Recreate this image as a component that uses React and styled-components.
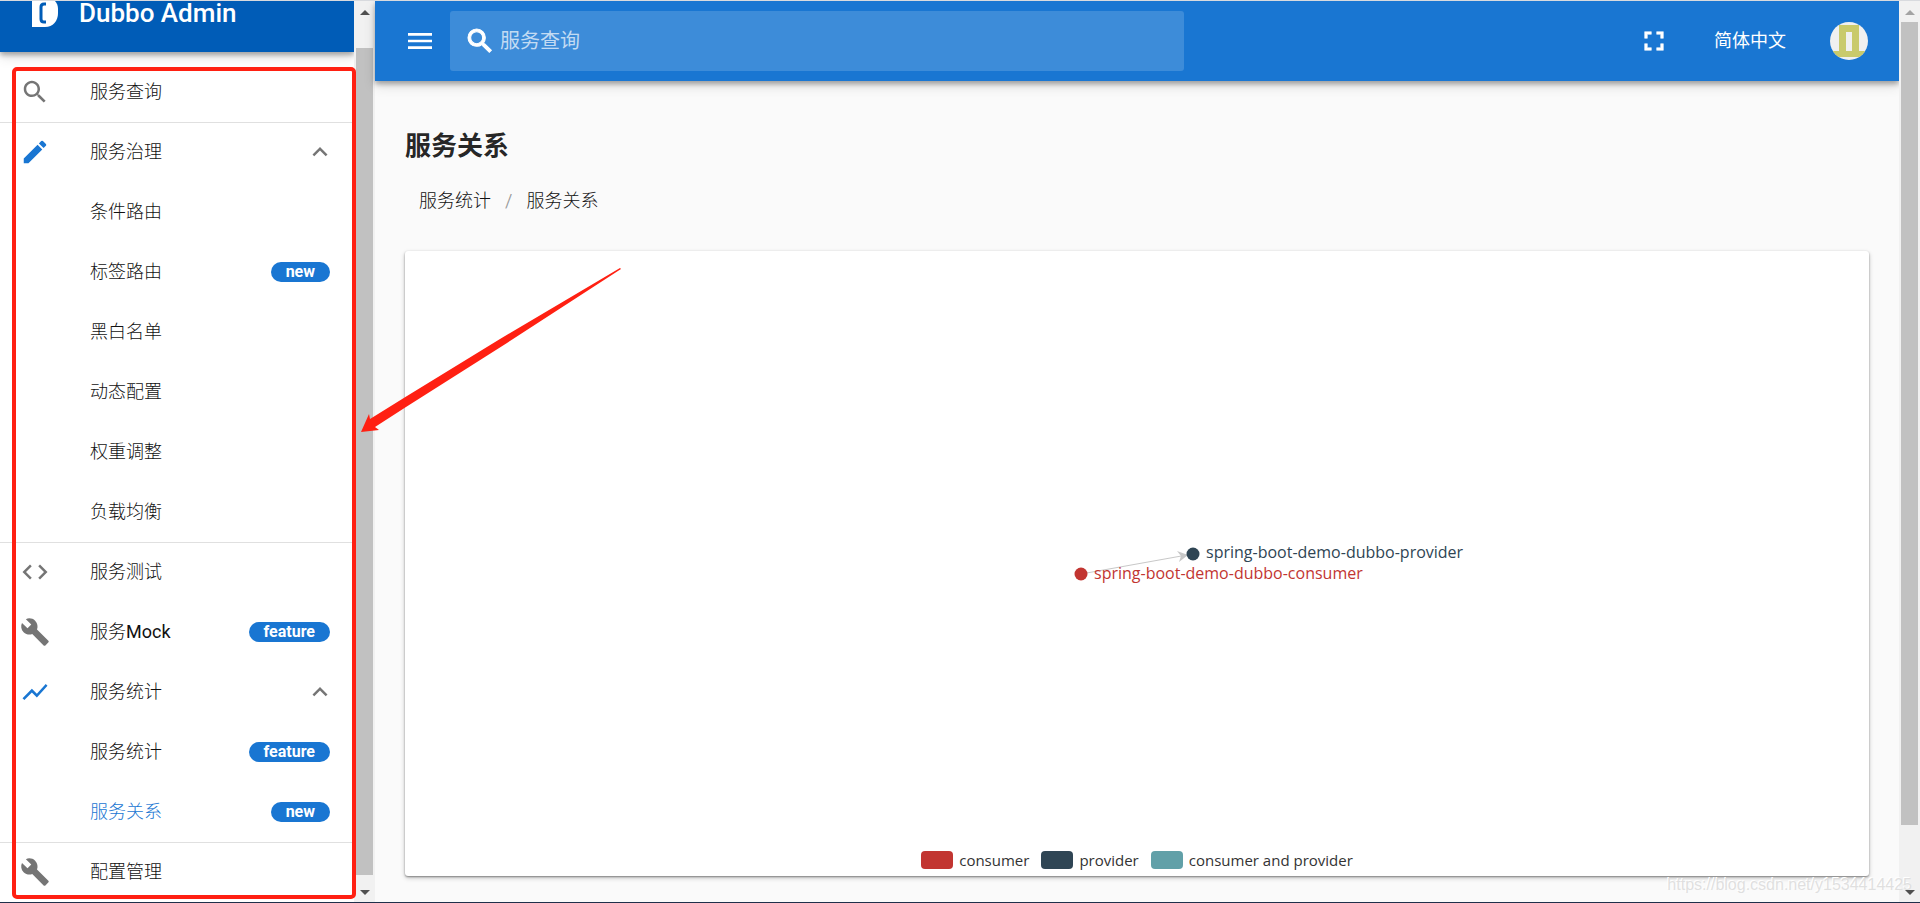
import React from "react";
import styled, { createGlobalStyle, css } from "styled-components";

const GlobalStyle = createGlobalStyle`
  *, *::before, *::after { box-sizing: border-box; }
  body {
    margin: 0;
    background: #fafafa;
    color: rgba(0, 0, 0, 0.87);
    font-family: Roboto, "Noto Sans CJK SC", sans-serif;
    font-size: 18px;
    line-height: 24px;
  }
  button, input { font: inherit; color: inherit; }
  button { border: 0; padding: 0; background: none; cursor: pointer; }
  a { color: inherit; text-decoration: none; }
  ul, ol { list-style: none; margin: 0; padding: 0; }
`;

const Page = styled.div`
  position: relative;
  display: grid;
  grid-template-columns: 354px 21px minmax(0, 1fr) 21px;
  min-height: 100vh;
  overflow: hidden;
  border-top: 1px solid #d8dade;
  border-bottom: 1px solid #1f2f4a;
`;

/* ---------- icons ---------- */

const paths = {
  search:
    "M15.5 14h-.79l-.28-.27C15.41 12.59 16 11.11 16 9.5 16 5.91 13.09 3 9.5 3S3 5.91 3 9.5 5.91 16 9.5 16c1.61 0 3.09-.59 4.23-1.57l.27.28v.79l5 4.99L20.49 19l-4.99-5zm-6 0C7.01 14 5 11.99 5 9.5S7.01 5 9.5 5 14 7.01 14 9.5 11.99 14 9.5 14z",
  edit:
    "M3 17.25V21h3.75L17.81 9.94l-3.75-3.75L3 17.25zM20.71 7.04a1 1 0 0 0 0-1.41l-2.34-2.34a1 1 0 0 0-1.41 0l-1.83 1.83 3.75 3.75 1.83-1.83z",
  code:
    "M9.4 16.6L4.8 12l4.6-4.6L8 6l-6 6 6 6 1.4-1.4zm5.2 0l4.6-4.6-4.6-4.6L16 6l6 6-6 6-1.4-1.4z",
  build:
    "M22.7 19l-9.1-9.1c.9-2.3.4-5-1.5-6.9-2-2-5-2.4-7.4-1.3L9 6 6 9 1.6 4.7C.4 7.1.9 10.1 2.9 12.1c1.9 1.9 4.6 2.4 6.9 1.5l9.1 9.1c.4.4 1 .4 1.4 0l2.3-2.3c.5-.4.5-1.1.1-1.4z",
  chart: "M3.5 18.49l6-6.01 4 4L22 6.92l-1.41-1.41-7.09 7.97-4-4L2 16.99z",
  up: "M12 8l-6 6 1.41 1.41L12 10.83l4.59 4.58L18 14z",
  menu: "M3 18h18v-2H3v2zm0-5h18v-2H3v2zm0-7v2h18V6H3z",
  fullscreen:
    "M7 14H5v5h5v-2H7v-3zm-2-4h2V7h3V5H5v5zm12 7h-3v2h5v-5h-2v3zM14 5v2h3v3h2V5h-5z",
};

const Svg = styled.svg`
  display: block;
  flex: none;
  width: ${(p) => p.$size}px;
  height: ${(p) => p.$size}px;
  fill: currentColor;
  stroke: currentColor;
  stroke-width: ${(p) => p.$weight || 0};
`;

const Icon = ({ name, size = 30, weight }) => (
  <Svg viewBox="0 0 24 24" $size={size} $weight={weight} aria-hidden="true">
    <path d={paths[name]} />
  </Svg>
);

/* ---------- sidebar ---------- */

const Sidebar = styled.aside`
  background: #fff;
`;

const Brand = styled.header`
  display: flex;
  align-items: flex-start;
  gap: 15px;
  height: 51px;
  margin-bottom: 10px;
  padding: 0 26px;
  background: #005cb7;
  color: #fff;
  font-size: 26px;
  font-weight: 500;
  box-shadow: 0 3px 5px rgba(0, 0, 0, 0.3), 0 5px 12px rgba(0, 0, 0, 0.12);
`;

const rowStyle = css`
  display: flex;
  align-items: center;
  width: 100%;
  height: 60px;
  padding: 0 24px 2px 20px;
  border-top: 1px solid ${(p) => (p.$divided ? "#e0e0e0" : "transparent")};
  color: ${(p) => (p.$active ? "#1976d2" : "#111")};
  font-weight: 300;
  text-align: left;
`;
const NavLink = styled.a`${rowStyle}`;
const NavToggle = styled.button`${rowStyle}`;

const IconSlot = styled.span`
  width: 70px;
  flex: none;
  color: ${(p) => (p.$active ? "#1976d2" : "#757575")};
`;
const NavLabel = styled.span`
  flex: 1;
  b { font-weight: 400; }
`;
const Chevron = styled.span`
  color: #757575;
  margin-right: -5px;
`;
const Badge = styled.span`
  height: 20px;
  padding: 0 15px;
  border-radius: 10px;
  background: #1976d2;
  color: #fff;
  font-size: 16px;
  font-weight: 700;
  line-height: 20px;
`;

const nav = [
  { label: "服务查询", icon: "search" },
  {
    label: "服务治理", icon: "edit", highlight: true, divided: true,
    children: [
      { label: "条件路由" },
      { label: "标签路由", badge: "new" },
      { label: "黑白名单" },
      { label: "动态配置" },
      { label: "权重调整" },
      { label: "负载均衡" },
    ],
  },
  { label: "服务测试", icon: "code", divided: true },
  { label: "服务", latin: "Mock", icon: "build", badge: "feature" },
  {
    label: "服务统计", icon: "chart", highlight: true,
    children: [
      { label: "服务统计", badge: "feature" },
      { label: "服务关系", badge: "new", active: true },
    ],
  },
  { label: "配置管理", icon: "build", divided: true },
];

function NavItem({ item }) {
  const content = (
    <>
      <IconSlot $active={item.highlight}>
        {item.icon && <Icon name={item.icon} />}
      </IconSlot>
      <NavLabel>
        {item.label}
        {item.latin && <b>{item.latin}</b>}
      </NavLabel>
      {item.badge && <Badge>{item.badge}</Badge>}
      {item.children && <Chevron><Icon name="up" /></Chevron>}
    </>
  );
  return (
    <li>
      {item.children ? (
        <>
          <NavToggle type="button" aria-expanded="true" $divided={item.divided}>
            {content}
          </NavToggle>
          <ul>
            {item.children.map((c) => <NavItem key={c.label} item={c} />)}
          </ul>
        </>
      ) : (
        <NavLink href="#" $divided={item.divided} $active={item.active}>
          {content}
        </NavLink>
      )}
    </li>
  );
}

const Logo = () => (
  <svg width="38" height="30" viewBox="0 8 38 30" aria-hidden="true">
    <path fill="#fff" d="M6 4h12c9 0 14 5 14 12v4c0 8-5 14-13 14H6z" />
    <path fill="none" stroke="#005cb7" strokeWidth="3" d="M20 11h-2q-3 0-3 3v12q0 3 3 3h2" />
  </svg>
);

/* ---------- scrollbars ---------- */

const Track = styled.div`
  display: flex;
  flex-direction: column;
  align-items: center;
  justify-content: space-between;
  padding: 9px 0 7px;
  background: #f1f1f1;
`;
const Thumb = styled.div`
  flex: 1;
  width: 17px;
  margin: ${(p) => p.$before}px 0 ${(p) => p.$after}px;
  background: #c1c1c1;
`;
const Arrow = styled.span`
  border: 5px solid transparent;
  border-top-width: ${(p) => (p.$down ? 5 : 0)}px;
  border-bottom-width: ${(p) => (p.$down ? 0 : 5)}px;
  border-${(p) => (p.$down ? "top" : "bottom")}-color: ${(p) => (p.$dim ? "#a3a3a3" : "#505050")};
`;
const Scrollbar = ({ before, after, dim }) => (
  <Track aria-hidden="true">
    <Arrow $dim={dim} />
    <Thumb $before={before} $after={after} />
    <Arrow $down />
  </Track>
);

/* ---------- main column ---------- */

const Main = styled.div`
  display: flex;
  flex-direction: column;
`;

const AppBar = styled.header`
  display: flex;
  align-items: center;
  height: 80px;
  padding: 0 31px 0 29px;
  background: #1976d2;
  color: #fff;
  box-shadow: 0 3px 5px rgba(0, 0, 0, 0.3), 0 5px 12px rgba(0, 0, 0, 0.12);
`;
const SearchBox = styled.label`
  display: flex;
  align-items: center;
  gap: 4px;
  flex: 1;
  max-width: 734px;
  height: 60px;
  margin-left: 14px;
  padding: 0 14px;
  border-radius: 3px;
  background: rgba(255, 255, 255, 0.16);
  input {
    flex: 1;
    min-width: 0;
    padding: 0;
    border: 0;
    outline: 0;
    background: none;
    font-size: 20px;
  }
  input::placeholder { color: rgba(255, 255, 255, 0.7); opacity: 1; }
`;
const Actions = styled.div`
  display: flex;
  align-items: center;
  margin-left: auto;
`;
const Language = styled.button`
  margin: 0 44px;
  padding: 0;
  color: #fff;
`;
const Avatar = styled.svg`
  display: block;
  width: 38px;
  height: 38px;
  border-radius: 50%;
`;

const Content = styled.main`
  display: flex;
  flex-direction: column;
  flex: 1;
  padding: 45px 30px 26px;
`;
const Title = styled.h1`
  margin: 0;
  font-size: 26px;
  line-height: 40px;
  font-weight: 700;
`;
const Breadcrumbs = styled.ol`
  display: flex;
  padding: 23px 14px 38px;
  color: #111;
  font-weight: 300;
  li + li::before {
    content: "/";
    padding: 0 14px;
    color: rgba(0, 0, 0, 0.38);
    font-weight: 400;
  }
`;
const Card = styled.section`
  display: flex;
  flex-direction: column;
  flex: 1;
  padding: 29px 0 3px;
  border-radius: 3px;
  background: #fff;
  box-shadow: 0 1px 2px rgba(0, 0, 0, 0.4), 0 2px 5px rgba(0, 0, 0, 0.2);
`;
const GraphArea = styled.div`
  display: flex;
  flex: 1;
  align-items: center;
  justify-content: center;
`;
const Graph = styled.svg`
  display: block;
  flex: none;
  font-family: "Open Sans", sans-serif;
  font-size: 16px;
`;
const Legend = styled.ul`
  display: flex;
  justify-content: center;
  gap: 12px;
  height: 26px;
  color: #333;
  font-family: "Open Sans", sans-serif;
  font-size: 15px;
  line-height: 22px;
  li { display: flex; align-items: center; gap: 6px; }
`;
const Swatch = styled.span`
  width: 32px;
  height: 18px;
  border-radius: 4px;
  background: ${(p) => p.$color};
`;

const categories = [
  { name: "consumer", color: "#c23531" },
  { name: "provider", color: "#2f4554" },
  { name: "consumer and provider", color: "#61a0a8" },
];

/* ---------- annotations ---------- */

const Highlight = styled.div`
  position: absolute;
  left: 12px;
  top: 66px;
  width: 344px;
  bottom: 3px;
  border: 4px solid #ff2012;
  border-radius: 5px;
  pointer-events: none;
`;
const Pointer = styled.svg`
  position: absolute;
  left: 340px;
  top: 239px;
  pointer-events: none;
`;
const Watermark = styled.div`
  position: absolute;
  right: 8px;
  bottom: 7px;
  color: rgba(222, 222, 222, 0.95);
  font-family: "Liberation Sans", sans-serif;
  font-size: 16px;
  line-height: 20px;
  text-shadow: -1px -1px 0 #fff;
  pointer-events: none;
`;

export default function App() {
  return (
    <>
      <GlobalStyle />
      <Page>
        <Sidebar>
          <Brand><Logo />Dubbo Admin</Brand>
          <nav>
            <ul>{nav.map((n) => <NavItem key={n.label + n.icon} item={n} />)}</ul>
          </nav>
        </Sidebar>
        <Scrollbar before={33} after={15} />
        <Main>
          <AppBar>
            <button type="button" aria-label="Menu"><Icon name="menu" size={32} /></button>
            <SearchBox>
              <Icon name="search" size={32} weight={0.8} />
              <input type="text" placeholder="服务查询" aria-label="服务查询" />
            </SearchBox>
            <Actions>
              <button type="button" aria-label="Fullscreen"><Icon name="fullscreen" size={32} weight={0.4} /></button>
              <Language type="button">简体中文</Language>
              <button type="button" aria-label="Account">
                <Avatar viewBox="0 0 38 38">
                  <path fill="#f0f0f0" d="M0 0h38v38H0z" />
                  <path fill="#c9ca6c" fillRule="evenodd" d="M9 3h20v26h9v6H0v-6h9zM16 10v19h6V10z" />
                </Avatar>
              </button>
            </Actions>
          </AppBar>
          <Content>
            <Title>服务关系</Title>
            <nav aria-label="Breadcrumb">
              <Breadcrumbs>
                <li><a href="#">服务统计</a></li>
                <li><a href="#">服务关系</a></li>
              </Breadcrumbs>
            </nav>
            <Card>
              <GraphArea>
                <Graph width="720" height="60" viewBox="0 0 720 60">
                  <path d="M304 40L410 21" stroke="#c8c8c8" fill="none" />
                  <path d="M411 21L400 17l4 5-2 6z" fill="#c8c8c8" />
                  <circle cx="304" cy="40" r="6.5" fill="#c23531" />
                  <circle cx="416" cy="20" r="6.5" fill="#2f4554" />
                  <text x="429" y="24" fill="#2f4554">spring-boot-demo-dubbo-provider</text>
                  <text x="317" y="45" fill="#c23531">spring-boot-demo-dubbo-consumer</text>
                </Graph>
              </GraphArea>
              <Legend>
                {categories.map((c) => (
                  <li key={c.name}><Swatch $color={c.color} />{c.name}</li>
                ))}
              </Legend>
            </Card>
          </Content>
        </Main>
        <Scrollbar before={7} after={65} dim />
        <Highlight />
        <Pointer width="300" height="200" viewBox="0 0 300 200" aria-hidden="true">
          <path fill="#ff2012" d="M21 192L29 174L30 179L67 156L160 99L280 28L281 29L167 103L66 167L35 187L39 190z" />
        </Pointer>
        <Watermark>https://blog.csdn.net/y1534414425</Watermark>
      </Page>
    </>
  );
}
